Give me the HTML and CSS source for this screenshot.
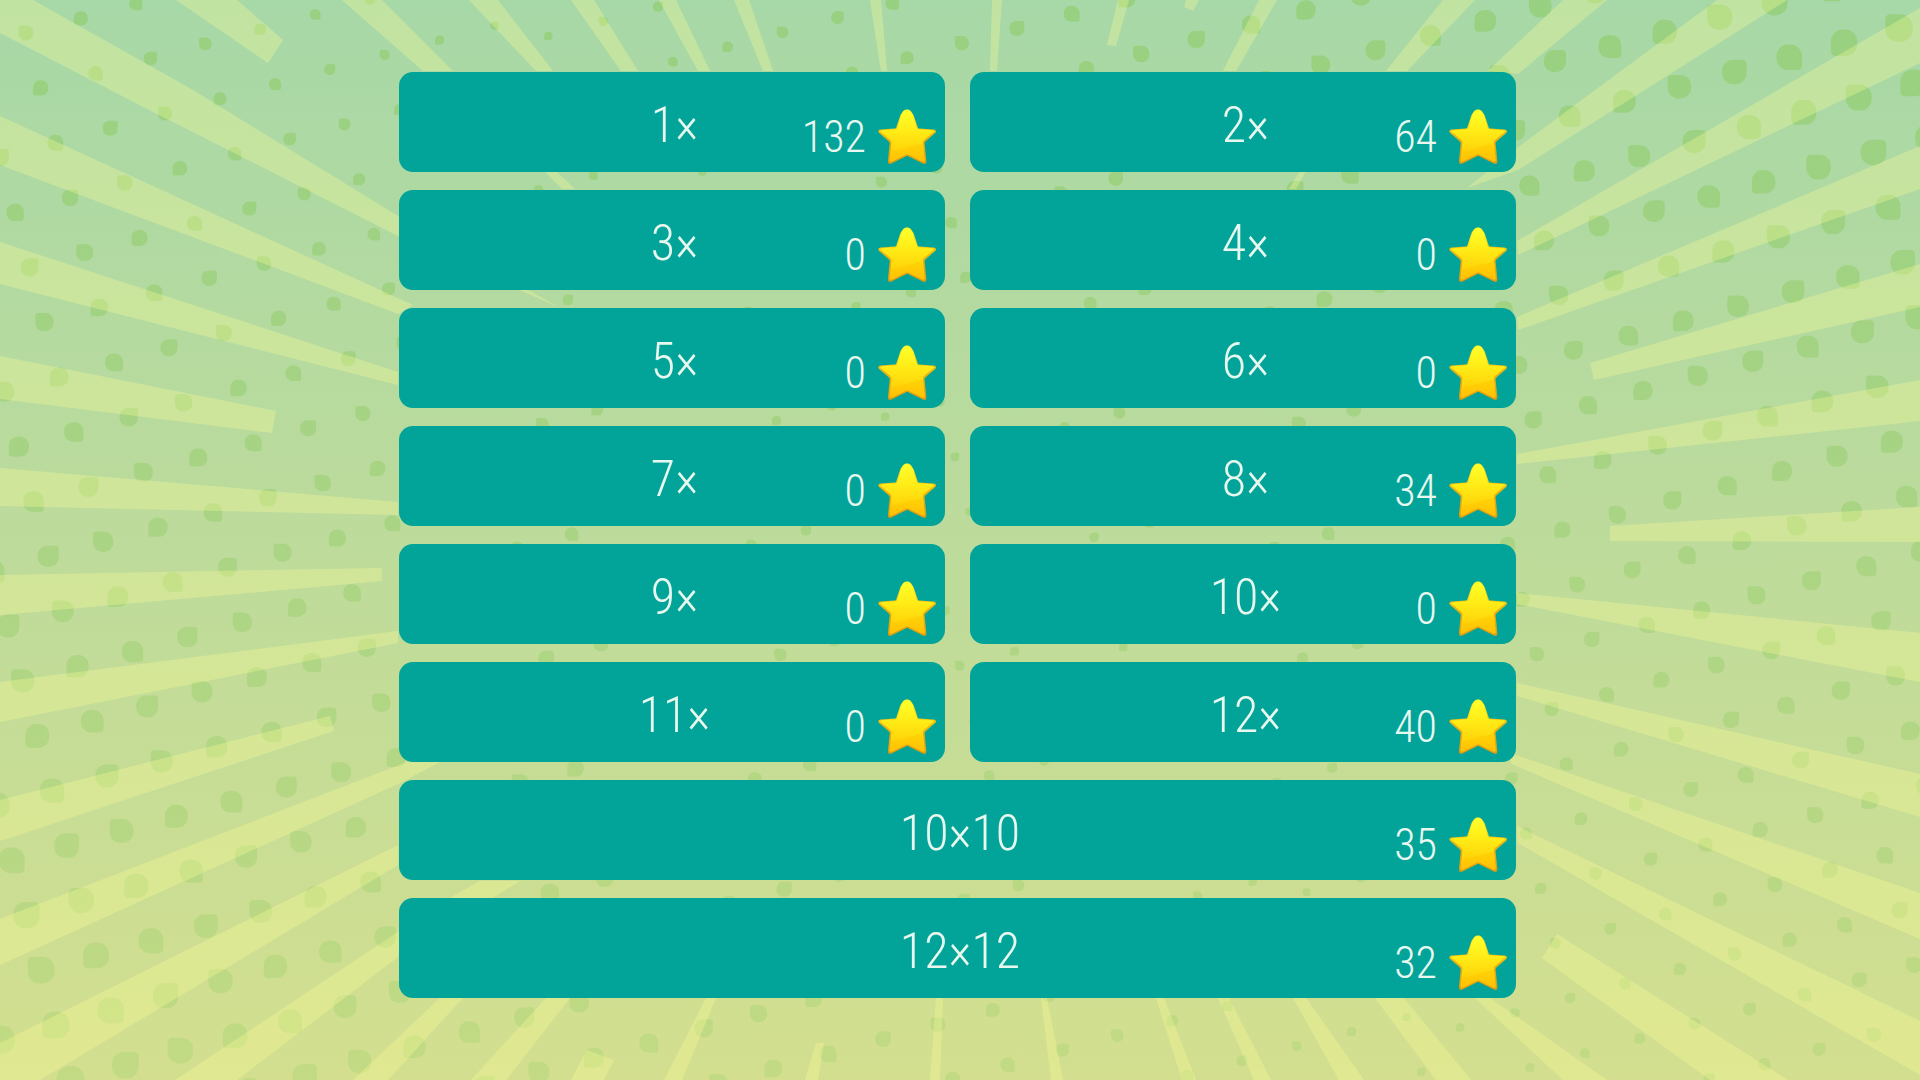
FILE: index.html
```
<!DOCTYPE html>
<html lang="en">
  <head>
    <meta charset="utf-8">
    <title>Times tables</title>
    <meta name="viewport" content="width=device-width, initial-scale=1.0">
    <link rel="stylesheet" href="styles.css">
  </head>
  <body>
    <svg class="backdrop" viewBox="0 0 1920 1080" preserveAspectRatio="xMidYMid slice" aria-hidden="true">
      <defs>
        <linearGradient id="sky" x1="0" y1="0" x2="0" y2="1">
          <stop offset="0" stop-color="#a7d8a7"></stop>
          <stop offset="0.5" stop-color="#bddb9b"></stop>
          <stop offset="1" stop-color="#d3df8f"></stop>
        </linearGradient>
        <linearGradient id="dot_fill" gradientUnits="userSpaceOnUse" x1="0" y1="0" x2="0" y2="1080">
          <stop offset="0" stop-color="#88c95a" stop-opacity="0.5"></stop>
          <stop offset="1" stop-color="#88c95a" stop-opacity="0.22"></stop>
        </linearGradient>
      </defs>

      <rect width="1920" height="1080" fill="url(#sky)"></rect>
      <g id="dots" fill="url(#dot_fill)"></g>

      <g class="rays">
        <!-- left -->
        <path d="M0 -18L33 0 193 90 398 216 560 308 398 236 157 114 0 33z"></path>
        <path d="M0 116L413 305 398 314 0 165z"></path>
        <path d="M0 242L398 372V385L0 284z"></path>
        <path d="M0 356L276 411 272 433 0 399z"></path>
        <path d="M0 468L398 502V515L0 506z"></path>
        <path d="M0 575L382 568V581L0 615z"></path>
        <path d="M0 682L398 631V643L0 722z"></path>
        <path d="M0 800L330 716 334 731 0 841z"></path>
        <path d="M0 919L407 762H440L398 784 0 965z"></path>
        <path d="M0 1043L398 845V865L40 1080H0z"></path>
        <path d="M175 1080L398 932 450 898 480 881H520L398 957 237 1080z"></path>
        <!-- top -->
        <path d="M176 0L268 63 283 40 237 0z"></path>
        <path d="M342 0L423 71H453L382 0z"></path>
        <path d="M469 0L536 71H553L498 0z"></path>
        <path d="M571 0L621 71H638L594 0z"></path>
        <path d="M659 0L698 71H710L676 0z"></path>
        <path d="M734 0L763 71H773L749 0z"></path>
        <path d="M870 0L881 71H887L881 0z"></path>
        <path d="M992 0L990 71H997L1002 0z"></path>
        <path d="M1118 0L1107 45 1116 46 1129 0z"></path>
        <path d="M1186 0L1184 7 1193 11 1199 0z"></path>
        <path d="M1259 0L1223 71H1236L1277 0z"></path>
        <path d="M1443 0L1386 71H1407L1475 0z"></path>
        <path d="M544 171H556L575 189H562z"></path>
        <path d="M1300 171H1306L1296 189H1289z"></path>
        <!-- right -->
        <path d="M1563 0L1488 71 1518 74 1607 0z"></path>
        <path d="M1717 0L1517 148 1467 188 1518 170 1787 0z"></path>
        <path d="M1920 8L1517 241 1518 255 1920 63z"></path>
        <path d="M1920 146L1517 317 1518 330 1920 189z"></path>
        <path d="M1920 264L1590 363 1594 380 1920 307z"></path>
        <path d="M1920 380L1517 454V464L1920 421z"></path>
        <path d="M1920 507L1610 526V541L1920 542z"></path>
        <path d="M1517 593L1920 633V682L1517 604z"></path>
        <path d="M1517 683L1920 774V817L1517 696z"></path>
        <path d="M1507 752L1920 893V939L1512 764z"></path>
        <path d="M1517 826L1920 1021V1075L1518 843z"></path>
        <path d="M1557 934L1788 1080H1710L1542 958z"></path>
        <!-- bottom -->
        <path d="M440 998H463L388 1080H353z"></path>
        <path d="M546 998H570L506 1080H471z"></path>
        <path d="M587 1050L614 1060 604 1080H571z"></path>
        <path d="M706 998H716L682 1080H664z"></path>
        <path d="M816 1043H824L818 1080H805z"></path>
        <path d="M936 998H943L940 1080H930z"></path>
        <path d="M1041 998H1047L1063 1080H1051z"></path>
        <path d="M1156 998H1164L1196 1080H1182z"></path>
        <path d="M1218 998H1229L1271 1080H1254z"></path>
        <path d="M1293 998H1306L1364 1080H1339z"></path>
        <path d="M1375 998H1404L1471 1080H1436z"></path>
        <path d="M1475 998H1490L1607 1080H1563z"></path>
      </g>
    </svg>

    <svg class="sprite" aria-hidden="true">
      <defs>
        <linearGradient id="star_fill" x1="0" y1="0" x2="0" y2="1">
          <stop offset="0" stop-color="#ffff2a"></stop>
          <stop offset="0.4" stop-color="#ffec17"></stop>
          <stop offset="0.75" stop-color="#ffd60a"></stop>
          <stop offset="1" stop-color="#ffbf0c"></stop>
        </linearGradient>
        <linearGradient id="star_edge" x1="0" y1="0" x2="0" y2="1">
          <stop offset="0" stop-color="#fff32a"></stop>
          <stop offset="0.5" stop-color="#e8b411"></stop>
          <stop offset="1" stop-color="#dd9c12"></stop>
        </linearGradient>
        <symbol id="star" viewBox="0 0 174 165">
          <path fill="url(#star_edge)" d="M87 0C97 0 102 8 107 18L119 53C120 56 121 57 124 57L166 60C175 61 177 67 169 73L143 95C140 98 139 101 140 104L145 153C146 162 141 166 133 161L92 141C89 139 86 139 83 141L42 161C34 166 29 162 30 153L35 104C36 101 35 98 32 95L6 73C-2 67 0 61 8 60L49 57C52 57 54 56 55 53L67 18C72 8 77 0 87 0z"></path>
          <path fill="url(#star_fill)" d="M87 2C96 2 100 10 105 20L116 54C117 58 119 59 122 59L163 62C170 63 170 66 164 70L139 91C135 95 134 98 135 102L140 148C141 157 138 159 131 155L92 136C89 134 86 134 83 136L44 155C37 159 34 157 35 148L40 102C41 98 40 95 36 91L11 70C5 66 5 63 12 62L52 59C55 59 57 58 58 54L69 20C74 10 78 2 87 2z"></path>
          <path fill="#ffc400" opacity="0.4" d="M38 127L135 102 140 148C141 157 138 159 131 155L92 136C89 134 86 134 83 136L44 155C37 159 34 157 35 148z"></path>
        </symbol>
      </defs>
    </svg>

    <main class="tables">
      <button class="table" type="button"><span class="name">1×</span><span class="score">132 <svg class="star"><use href="#star"></use></svg></span></button>
      <button class="table" type="button"><span class="name">2×</span><span class="score">64 <svg class="star"><use href="#star"></use></svg></span></button>
      <button class="table" type="button"><span class="name">3×</span><span class="score">0 <svg class="star"><use href="#star"></use></svg></span></button>
      <button class="table" type="button"><span class="name">4×</span><span class="score">0 <svg class="star"><use href="#star"></use></svg></span></button>
      <button class="table" type="button"><span class="name">5×</span><span class="score">0 <svg class="star"><use href="#star"></use></svg></span></button>
      <button class="table" type="button"><span class="name">6×</span><span class="score">0 <svg class="star"><use href="#star"></use></svg></span></button>
      <button class="table" type="button"><span class="name">7×</span><span class="score">0 <svg class="star"><use href="#star"></use></svg></span></button>
      <button class="table" type="button"><span class="name">8×</span><span class="score">34 <svg class="star"><use href="#star"></use></svg></span></button>
      <button class="table" type="button"><span class="name">9×</span><span class="score">0 <svg class="star"><use href="#star"></use></svg></span></button>
      <button class="table" type="button"><span class="name">10×</span><span class="score">0 <svg class="star"><use href="#star"></use></svg></span></button>
      <button class="table" type="button"><span class="name">11×</span><span class="score">0 <svg class="star"><use href="#star"></use></svg></span></button>
      <button class="table" type="button"><span class="name">12×</span><span class="score">40 <svg class="star"><use href="#star"></use></svg></span></button>
      <button class="table wide" type="button"><span class="name">10×10</span><span class="score">35 <svg class="star"><use href="#star"></use></svg></span></button>
      <button class="table wide" type="button"><span class="name">12×12</span><span class="score">32 <svg class="star"><use href="#star"></use></svg></span></button>
    </main>

    <script src="dots.js"></script>
  </body>
</html>
```
FILE: styles.css
```
html {
  background: #bddb9b;
}

body {
  margin: 0;
  font-family: "Roboto Condensed", Roboto, sans-serif;
}

.backdrop {
  position: fixed;
  inset: 0;
  width: 100%;
  height: 100%;
  z-index: -1;
}

.rays {
  fill: #ffff96;
  opacity: 0.3;
}

.sprite {
  display: block;
  width: 0;
  height: 0;
}

.tables {
  display: grid;
  grid-template-columns: 1fr 1fr;
  gap: 18px 25px;

  box-sizing: border-box;
  width: 92%;
  max-width: 1122px;
  margin: 0 auto;
  padding: 72px 5px 72px 0;
}

.table {
  display: grid;
  grid-template-columns: 1fr auto 1fr;
  align-items: center;

  min-height: 100px;
  padding: 0 9px 0 14px;
  border: 0;
  border-radius: 14px;

  background: #02a499;
  color: #e8f8ef;
  font-family: inherit;
  font-weight: 300;
  cursor: pointer;
}

.table.wide {
  grid-column: span 2;
}

.name {
  grid-column: 2;
  margin-top: 6px;
  font-size: 50px;
  line-height: 60px;
}

.score {
  display: flex;
  align-items: center;
  justify-content: flex-end;
  gap: 12px;
  margin-top: 30px;

  font-size: 44px;
  line-height: 56px;
}

.star {
  width: 58px;
  height: 56px;
}
```
FILE: dots.js
```
const STEP_X = 54.9;
const STEP_Y = 14.67;

// Two tilted dot grids that meet on a diagonal, dots grow away from it
const fields = [
  { x: 26, y: 33, side: -1 },
  { x: 1899, y: 28, side: 1 }
];

const edge = (x, y) => (x - 490 - 0.91 * y) / 1.352;

let shapes = '';

fields.forEach(field => {
  for (let i = -45; i <= 45; i++) {
    for (let j = -30; j <= 45; j++) {
      const x = field.x + i * STEP_X + j * STEP_Y;
      const y = field.y - i * STEP_Y + j * STEP_X;
      const distance = edge(x, y) * field.side;

      if (distance < 0 || x < -20 || x > 1940 || y < -20 || y > 1100) continue;

      const r = 4 + distance * 0.0095;

      // Mostly round, with one corner left pointed
      const corner = Math.abs(i * 7 + j * 3) % 4;
      const radii = [0, 1, 2, 3].map(n => n === corner ? r * 0.35 : r * 0.9);
      const [a, b, c, d] = radii;

      shapes += `<path d="M${x - r + a} ${y - r}H${x + r - b}a${b} ${b} 0 0 1 ${b} ${b}V${y + r - c}a${c} ${c} 0 0 1 ${-c} ${c}H${x - r + d}a${d} ${d} 0 0 1 ${-d} ${-d}V${y - r + a}a${a} ${a} 0 0 1 ${a} ${-a}z"></path>`;
    }
  }
});

document.getElementById('dots').innerHTML = shapes;
```
